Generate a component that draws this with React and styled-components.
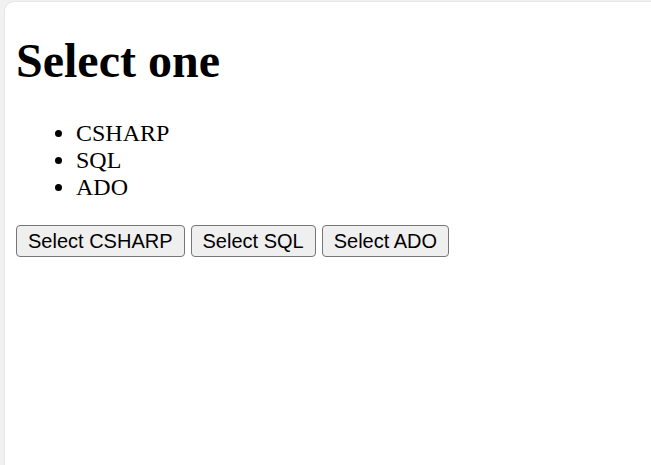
import React, { useState } from "react";
import styled, { createGlobalStyle } from "styled-components";

const GlobalStyle = createGlobalStyle`
  html, body {
    margin: 0;
    padding: 0;
    background-color: #f1f1f1;
  }
  #root {
    min-height: 100vh;
    display: flex;
    flex-direction: column;
  }
`;

const Frame = styled.div`
  flex: 1;
  display: flow-root;
  margin: 1px 0 0 4px;
  padding: 0 12px 0 11px;
  background-color: #fff;
  border-top: 1px solid #e6e6e6;
  border-left: 1px solid #e6e6e6;
  border-top-left-radius: 10px;
  font-family: "Liberation Serif", "Times New Roman", serif;
  color: #000;
`;

const Title = styled.h1`
  margin: 31px 0 32px;
  font-size: 48px;
  font-weight: 700;
  line-height: normal;
`;

const List = styled.ul`
  margin: 0 0 24px;
  padding-left: 60px;
  list-style: disc;
`;

const Item = styled.li`
  font-size: 24px;
  line-height: 27px;
  font-weight: ${(p) => (p.$active ? 700 : 400)};
`;

const ButtonRow = styled.div`
  display: flex;
  align-items: center;
  gap: 6px;
`;

const Button = styled.button`
  font-family: "Liberation Sans", Arial, sans-serif;
  font-size: 20px;
  line-height: 24px;
  padding: 3px 11px;
  color: #000;
  background-color: #efefef;
  border: 1px solid #767676;
  border-radius: 4px;
  cursor: pointer;

  &:hover {
    background-color: #e5e5e5;
  }
`;

const options = ["CSHARP", "SQL", "ADO"];

export default function App() {
  const [selected, setSelected] = useState(null);

  return (
    <>
      <GlobalStyle />
      <Frame>
        <Title>Select one</Title>
        <List>
          {options.map((opt) => (
            <Item key={opt} $active={selected === opt}>
              {opt}
            </Item>
          ))}
        </List>
        <ButtonRow>
          {options.map((opt) => (
            <Button key={opt} onClick={() => setSelected(opt)}>
              Select {opt}
            </Button>
          ))}
        </ButtonRow>
      </Frame>
    </>
  );
}
